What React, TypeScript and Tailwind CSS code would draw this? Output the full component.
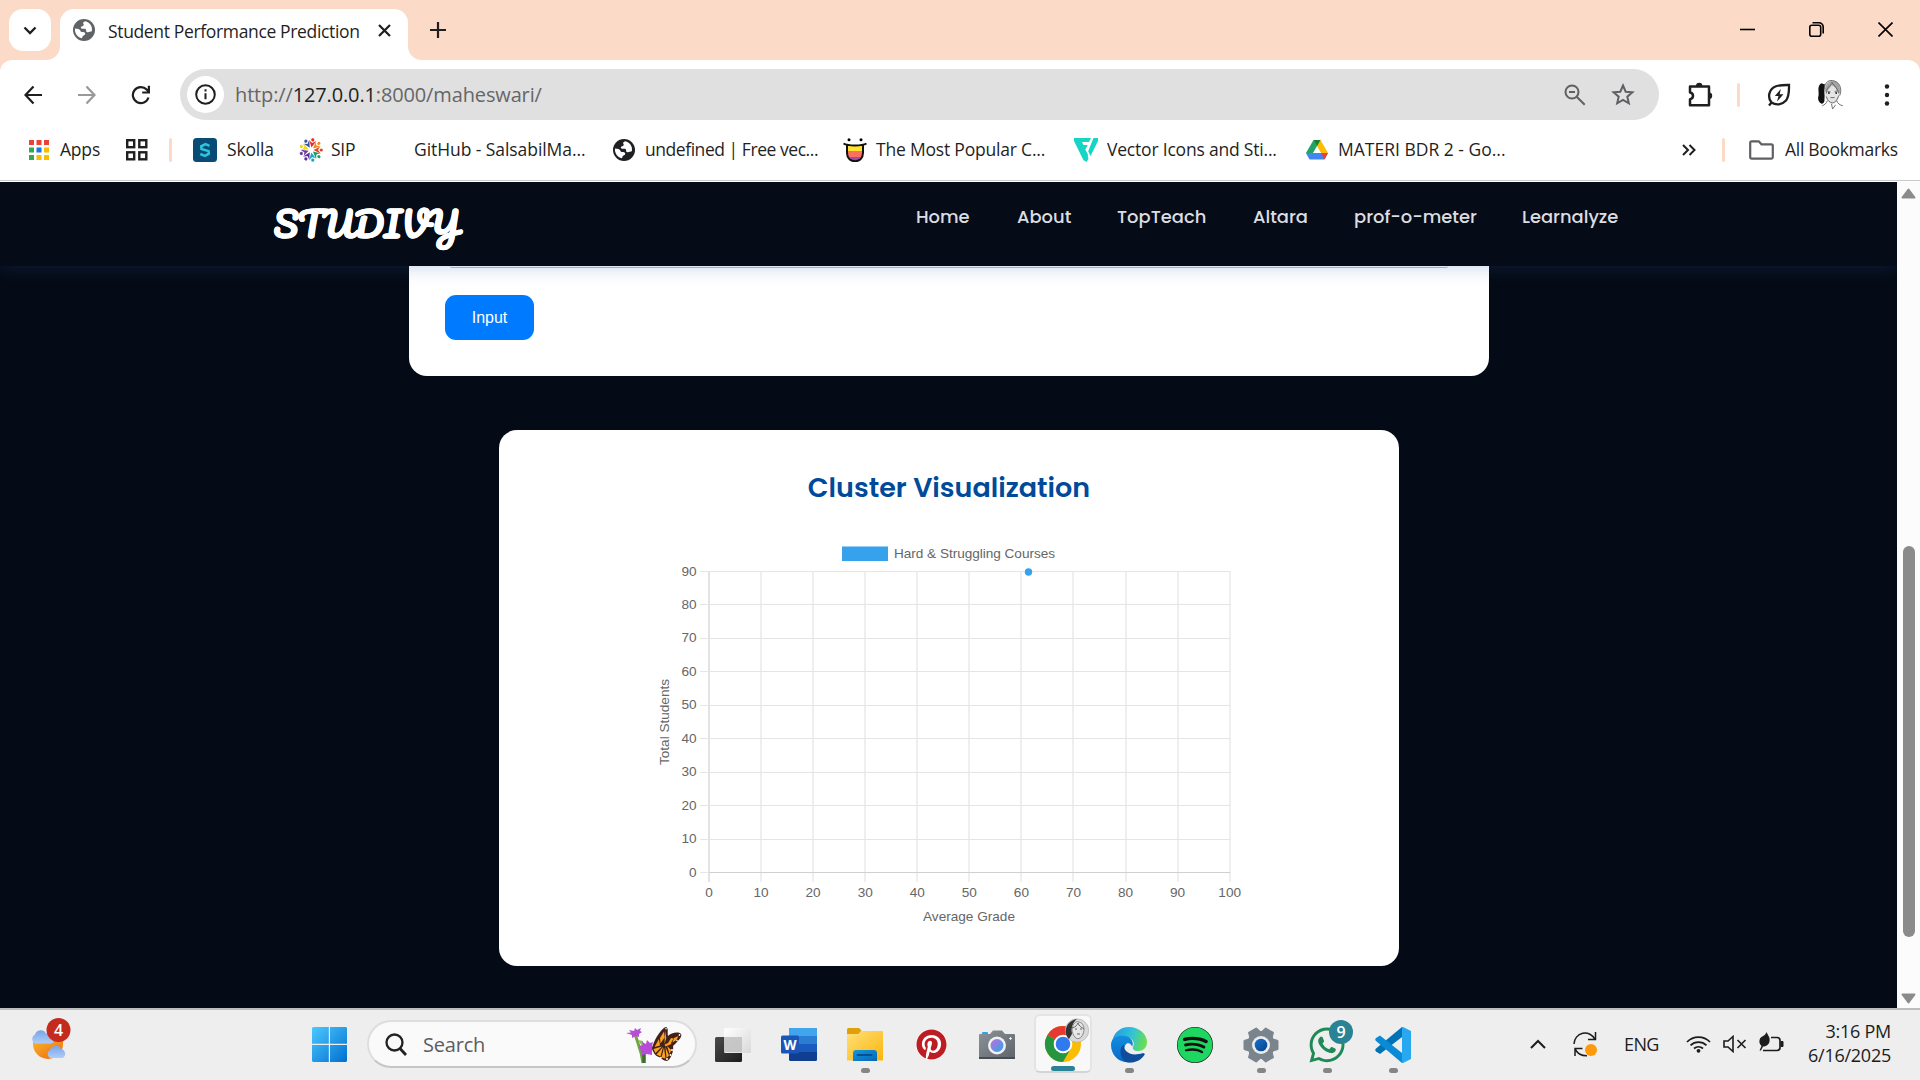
import React from "react";
import { FaSpotify, FaPinterest, FaWhatsapp } from "react-icons/fa";

const UI = "font-['Open_Sans','Noto_Sans',sans-serif]";

function Globe({ color }: { color: string }) {
  return (
    <svg width="22" height="22" viewBox="0 0 22 22">
      <circle cx="11" cy="11" r="11" fill={color} />
      <path
        d="M12.2 2.3c-1.6.6-2.2 1.3-2 2.300.2.9 1 1 .3 1.900-.6.8-2 .5-2.500 1.500-.4.9.1 1.700 1.300 1.800 1.500.1 3-.4 3.600.7.5 1.100-.2 2 .9 2.500 1.700.6 3.300-.3 5-.7 1.200-4.700-2.200-9-6.600-10zM2 9.600c-.6 4.600 2.400 8.700 6.800 9.700.700-.8.300-1.800 1.200-2.400 1-.7 2.300-.8 2.200-2.300-.1-1.400-1.700-1.300-3.300-1.500-1.600-.2-1.300-1.700-2.500-2.600C5.300 9.700 3.700 9.900 2 9.600z"
        fill="#fff"
      />
    </svg>
  );
}

function Portrait({ size }: { size: number }) {
  return (
    <svg width={size} height={size} viewBox="0 0 28 30" fill="none">
      <path d="M4 4c-5 4-1 9-3 14 0 5 4 8 6 4 1-5-1-11 3-16z" fill="#111" />
      <path d="M7 10C7 3 12 0 17 2c6 2 7 9 5 14-1 5-4 8-7 8-5 0-8-7-8-14z" fill="#e4e4e4" />
      <path d="M7 13C8 5 11 2 15 2c6 0 8 6 7 12-2-2-3-6-8-8-2 4-4 5-7 7z" fill="#a5a5a5" />
      <path d="M7 10C7 3 12 0 17 2c6 2 7 9 5 14M9 14c0-5 3-7 6-10M14 3c3 4 6 6 7 11M10 12l3 .5M17 12l3-.5M13 18h4M9 17c1 4 4 6 6 6 3 0 5-4 6-7M10 21c-1 3-3 4-5 5M19 21c1 3 3 4 6 5M14 24l1 5 3-4" stroke="#555" strokeWidth=".8" />
      <circle cx="11.500" cy="13.500" r=".9" fill="#222" />
      <circle cx="18.500" cy="13.500" r=".9" fill="#222" />
    </svg>
  );
}

function TabStrip() {
  return (
    <div className="flex h-[60px] bg-[#fcdac8] pl-[9px] pt-[9px]">
      <button className="flex h-[42px] w-[42px] items-center justify-center rounded-[14px] bg-white">
        <svg width="14" height="9" viewBox="0 0 14 9" fill="none">
          <path d="M1.500 1.500L7 7l5.500-5.500" stroke="#1f1f1f" strokeWidth="2.300" />
        </svg>
      </button>
      <svg className="-ml-[5px] mt-[37px]" width="14" height="14" viewBox="0 0 14 14">
        <path d="M14 0v14H0C8 14 14 8 14 0z" fill="#fff" />
      </svg>
      <div className="flex h-[51px] w-[348px] items-center rounded-t-[14px] bg-white pb-[9px] pl-[13px]">
        <Globe color="#5f6368" />
        <span className="ml-[13px] w-[253px] whitespace-nowrap pt-[2px] text-[17.500px] tracking-[-0.350px] text-[#1f1f1f]">
          Student Performance Prediction
        </span>
        <svg className="ml-[17px]" width="13" height="13" viewBox="0 0 13 13">
          <path d="M1 1l11 11M12 1L1 12" stroke="#1f1f1f" strokeWidth="2.200" />
        </svg>
      </div>
      <svg className="mt-[37px]" width="14" height="14" viewBox="0 0 14 14">
        <path d="M0 0v14h14C6 14 0 8 0 0z" fill="#fff" />
      </svg>
      <svg className="ml-[8px] mt-[13px]" width="16" height="16" viewBox="0 0 16 16">
        <path d="M8 0v16M0 8h16" stroke="#1f1f1f" strokeWidth="2.200" />
      </svg>
      <div className="ml-auto flex w-[180px] items-start pt-[13px]">
        <svg width="15" height="15" viewBox="0 0 15 15">
          <path d="M0 7.500h15" stroke="#000" strokeWidth="1.600" />
        </svg>
        <svg className="ml-[54px]" width="15" height="15" viewBox="0 0 15 15" fill="none" stroke="#000" strokeWidth="1.600">
          <rect x=".8" y="3.300" width="10.900" height="10.900" rx="2" />
          <path d="M3.500.8H10a4.200 4.200 0 0 1 4.200 4.200v6.500" />
        </svg>
        <svg className="ml-[54px]" width="15" height="15" viewBox="0 0 15 15">
          <path d="M.5.500l14 14M14.500.500l-14 14" stroke="#000" strokeWidth="1.600" />
        </svg>
      </div>
    </div>
  );
}

function AddressBar() {
  return (
    <div className="flex h-[69px] items-center rounded-t-[12px] bg-white pl-[24px]">
      <svg width="18" height="20" viewBox="0 0 18 20" fill="none" stroke="#1f1f1f" strokeWidth="2.200">
        <path d="M18 10H2M9.500 1.500L1.500 10l8 8.500" />
      </svg>
      <svg className="ml-[36px]" width="18" height="20" viewBox="0 0 18 20" fill="none" stroke="#999" strokeWidth="2.200">
        <path d="M0 10h16M8.500 1.500l8 8.500-8 8.500" />
      </svg>
      <svg className="ml-[35px]" width="20" height="20" viewBox="0 0 20 20" fill="none" stroke="#1f1f1f" strokeWidth="2.200">
        <path d="M17.500 12.500A8 8 0 1 1 15.700 4.600L18 7M17.900.8V7.500H11.200" />
      </svg>
      <div className="ml-[29px] flex h-[51px] w-[1479px] items-center rounded-full bg-[#e0e0e0] pl-[7px]">
        <div className="flex h-[37px] w-[37px] items-center justify-center rounded-full bg-white">
          <svg width="21" height="21" viewBox="0 0 21 21" fill="none" stroke="#1f1f1f" strokeWidth="2">
            <circle cx="10.500" cy="10.500" r="9.300" />
            <path d="M10.500 9.300v6M10.500 5.300v2.200" />
          </svg>
        </div>
        <span className="ml-[11px] w-[311px] whitespace-nowrap text-[20px] tracking-[-0.140px] text-[#666]">
          http://<span className="text-[#1f1f1f]">127.0.0.1</span>:8000/maheswari/
        </span>
        <svg className="ml-[1018px]" width="22" height="22" viewBox="0 0 22 22" fill="none" stroke="#5f6063" strokeWidth="2">
          <circle cx="8" cy="8" r="6.500" />
          <path d="M12.700 12.700l8 8M5 8h6" />
        </svg>
        <svg className="ml-[25px]" width="24" height="23" viewBox="0 0 24 23" fill="none" stroke="#5f6063" strokeWidth="2">
          <path d="M12 2.500l2.700 6.200 6.700.6-5.100 4.400 1.500 6.600L12 16.800l-5.800 3.500 1.500-6.600-5.100-4.400 6.700-.6z" />
        </svg>
      </div>
      <svg className="-mt-[2px] ml-[28px]" width="26" height="26" viewBox="0 0 26 26">
        <path d="M3 5.500h19v18.700H3v-6c4-.5 4-6.200 0-6.700z" fill="none" stroke="#1f1f1f" strokeWidth="2.500" strokeLinejoin="round" />
        <path d="M9 5a3.200 3.200 0 0 1 6.400 0zM22 11.500a3.200 3.200 0 0 1 0 6.400z" fill="#1f1f1f" />
      </svg>
      <div className="ml-[24px] h-[24px] w-[3px] rounded bg-[#fcdac8]" />
      <svg className="ml-[27px]" width="24" height="24" viewBox="0 0 24 24" fill="none" stroke="#1f1f1f" strokeWidth="2.300">
        <path d="M4.500 19.500C0 14 2 6 9 3.300 13 1.800 18 2 22 2c0 5 .5 11-3 15.500-4 4.500-10 5-14.500 2zM5 19l-3 3.500" />
        <path d="M13.800 6L7.800 13h3.700l-1.500 5.500 6.500-7.300h-3.800z" fill="#1f1f1f" stroke="none" />
      </svg>
      <div className="ml-[25px]"><Portrait size={31} /></div>
      <svg className="ml-[37px]" width="6" height="22" viewBox="0 0 6 22" fill="#1f1f1f">
        <circle cx="3" cy="2.500" r="2.200" />
        <circle cx="3" cy="11" r="2.200" />
        <circle cx="3" cy="19.500" r="2.200" />
      </svg>
    </div>
  );
}

const dotColors = ["#ea4335", "#ea4335", "#ea4335", "#34a853", "#1a73e8", "#fbbc04", "#34a853", "#fbbc04", "#fbbc04"];
const sipColors = ["#ea2a1f", "#f58a1f", "#e8412d", "#1f9d55", "#18a4c8", "#5b2d91", "#6b3fa0", "#f4d50c", "#3455a4"];

function BookmarkBar() {
  const label = "-mt-[2px] whitespace-nowrap text-[17.500px] text-[#1f1f1f]";
  return (
    <div className="flex h-[51px] items-center bg-white pb-[9px] pl-[29px]">
      <svg width="20" height="20" viewBox="0 0 20 20">
        {dotColors.map((c, i) => (
          <rect key={i} x={(i % 3) * 7.500} y={Math.floor(i / 3) * 7.500} width="5" height="5" fill={c} />
        ))}
      </svg>
      <span className={`${label} ml-[11px] w-[42px] tracking-[-0.200px]`}>Apps</span>
      <svg className="ml-[24px]" width="22" height="22" viewBox="0 0 22 22" fill="none" stroke="#1f1f1f" strokeWidth="2.400">
        <rect x="1.200" y="1.200" width="7" height="7" />
        <rect x="13.300" y="1.200" width="7" height="7" />
        <rect x="1.200" y="13.300" width="7" height="7" />
        <rect x="13.300" y="13.300" width="7" height="7" />
      </svg>
      <div className="ml-[21px] h-[24px] w-[3px] rounded bg-[#fcdac8]" />
      <svg className="ml-[21px]" width="24" height="24" viewBox="0 0 24 24">
        <rect width="24" height="24" rx="3.500" fill="#084c75" />
        <path d="M16.500 7.800L12.500 6.200 8.200 8.300l.3 2.700 7.100 2.100.2 2.600-3.800 2.200-4.700-1.900" fill="none" stroke="#2ec4dc" strokeWidth="2.500" />
      </svg>
      <span className={`${label} ml-[10px] w-[50px] tracking-[-0.200px]`}>Skolla</span>
      <svg className="ml-[22px]" width="24" height="24" viewBox="-12 -12 24 24">
        {sipColors.map((c, i) => (
          <g key={i} transform={`rotate(${i * 40 + 10})`}>
            <path d="M0-2.500L-3.200-9l3.200 2L3.700-9.800z" fill={c} />
            <circle cx="0" cy="-10.300" r="1.600" fill={c} />
          </g>
        ))}
      </svg>
      <span className={`${label} ml-[8px] w-[28px] tracking-[-0.300px]`}>SIP</span>
      <span className={`${label} ml-[55px] w-[174px] tracking-[-0.070px]`}>GitHub - SalsabilMa...</span>
      <div className="ml-[25px]"><Globe color="#1f2023" /></div>
      <span className={`${label} ml-[10px] w-[176px] tracking-[-0.450px]`}>undefined | Free vec...</span>
      <svg className="ml-[22px]" width="24" height="24" viewBox="0 0 24 24">
        <path d="M4 7h16v7H4z" fill="#ffe52e" />
        <path d="M4 13h16l-1 6H5z" fill="#ff6f61" />
        <path d="M6 19h12l-3 4H9z" fill="#9c4fa0" />
        <path d="M.5 5.500C5 8 19 8 23.500 5.500M4 7v8c0 11 16 11 16 0V7" fill="none" stroke="#111" strokeWidth="2" />
        <circle cx="6" cy="1.700" r="1.500" />
        <circle cx="18" cy="1.700" r="1.500" />
      </svg>
      <span className={`${label} ml-[9px] w-[174px] tracking-[-0.200px]`}>The Most Popular C...</span>
      <svg className="ml-[24px]" width="24" height="24" viewBox="0 0 24 24" fill="#16d5c5">
        <path d="M0 0h17l-2 4H8l1.500 3h4.200l-2 4h-.6l3 6-2 4.500c-.7 1.700-2 1.700-3 0L0 3z" />
        <path d="M19.500 0H24v3l-7.500 15-2.300-4.700zM12 15l2.500 5-1.600 4-2-1z" />
      </svg>
      <span className={`${label} ml-[9px] w-[174px] tracking-[-0.200px]`}>Vector Icons and Sti...</span>
      <svg className="ml-[25px]" width="22" height="20" viewBox="0 0 22 20">
        <path d="M7.500 0h7L4 18.500 0 13z" fill="#1fa463" />
        <path d="M7.500 0h7L22 13h-7z" fill="#fbbc04" />
        <path d="M7.500 0L11 6.300 14.500 0z" fill="#188038" />
        <path d="M0 13h22l-3.500 6.500h-15z" fill="#4285f4" />
        <path d="M15 13h7l-3.500 6.500z" fill="#ea4335" />
        <path d="M11 6.500l3.800 6.500H7.200z" fill="#fff" />
      </svg>
      <span className={`${label} ml-[10px] w-[174px] tracking-[0px]`}>MATERI BDR 2 - Go...</span>
      <svg className="ml-[170px]" width="14" height="12" viewBox="0 0 14 12" fill="none" stroke="#1f1f1f" strokeWidth="2">
        <path d="M1 1l5 5-5 5M7.500 1l5 5-5 5" />
      </svg>
      <div className="ml-[26px] h-[24px] w-[3px] rounded bg-[#fcdac8]" />
      <svg className="ml-[24px]" width="25" height="20" viewBox="0 0 25 20" fill="none" stroke="#5f6063" strokeWidth="2.200">
        <path d="M1.200 3a1.500 1.500 0 0 1 1.500-1.700h7l2.800 3h9.800A1.500 1.500 0 0 1 23.800 6v11a1.600 1.600 0 0 1-1.600 1.600H2.800A1.600 1.600 0 0 1 1.200 17z" />
      </svg>
      <span className={`${label} ml-[11px] tracking-[-0.300px]`}>All Bookmarks</span>
    </div>
  );
}

function SiteHeader() {
  const link = "whitespace-nowrap";
  return (
    <header className="relative z-10 flex h-[84px] w-full shrink-0 bg-[#050b17] pl-[273px] font-['Poppins','Inter',sans-serif] text-[17.900px] font-medium text-[#dcdde0] shadow-[0_0_18px_0_rgba(40,85,170,0.28)]">
      <svg className="mt-[7px]" width="200" height="76" viewBox="0 0 200 76">
        <text
          x="0.500"
          y="49"
          textLength="185"
          lengthAdjust="spacingAndGlyphs"
          fill="#fff"
          stroke="#fff"
          strokeWidth="0.300"
          strokeLinejoin="round"
          className="font-['Pacifico','Lobster','DejaVu_Serif',serif] text-[34.500px] font-bold"
        >
          STUDIVY
        </text>
      </svg>
      <nav className="ml-[443px] flex pt-[22px]">
        <a className={`${link} w-[101px]`}>Home</a>
        <a className={`${link} w-[100px]`}>About</a>
        <a className={`${link} w-[136px]`}>TopTeach</a>
        <a className={`${link} w-[101px]`}>Altara</a>
        <a className={`${link} w-[168px]`}>prof-o-meter</a>
        <a className={`${link} w-[100px]`}>Learnalyze</a>
      </nav>
    </header>
  );
}

const X0 = 170;
const Y0 = 332;
const XS = 52.070;
const YS = 33.440;

function ScatterChart() {
  const xs = Array.from({ length: 11 }, (_, i) => i);
  const ys = Array.from({ length: 10 }, (_, i) => i);
  const line = "#e5e5e5";
  return (
    <svg className="block font-['Liberation_Sans',Arial,sans-serif] text-[13.600px]" width="820" height="400" viewBox="0 0 820 400" fill="#666">
      <rect x="303" y="6.500" width="46" height="14.500" fill="#36a2eb" />
      <text x="355" y="18" textLength="161">Hard &amp; Struggling Courses</text>
      {xs.map((i) => (
        <g key={i}>
          <path d={`M${Math.round(X0 + i * XS)} 31V342`} stroke={i === 0 ? "#d0d0d0" : line} strokeWidth="1.200" />
          <text x={X0 + i * XS} y="356.500" textAnchor="middle">{i * 10}</text>
        </g>
      ))}
      {ys.map((i) => (
        <g key={i}>
          <path d={`M161 ${Math.round(Y0 - i * YS) + 0.500}H691`} stroke={line} strokeWidth="1.200" />
          <text x="157.500" y={Y0 - i * YS + 4.500} textAnchor="end">{i * 10}</text>
        </g>
      ))}
      <path d="M170 332.500H691" stroke="#d0d0d0" strokeWidth="1.200" />
      <circle cx="489.500" cy="32" r="3.700" fill="#36a2eb" />
      <text x="430" y="381" textAnchor="middle" textLength="92">Average Grade</text>
      <text transform="translate(130 182) rotate(-90)" textAnchor="middle" textLength="86">Total Students</text>
    </svg>
  );
}

function WebPage() {
  return (
    <div className="flex h-[826px] bg-[#fcfcfc]">
      <main className="flex w-[1897px] flex-col items-center overflow-hidden bg-[#050b16]">
        <SiteHeader />
        <section className="ml-[1px] h-[110px] w-[1080px] shrink-0 rounded-b-[18px] bg-white px-[36px]">
          <div className="ml-[5px] h-[2px] w-[998px] rounded-b border-b border-[#b9bdc6]" />
          <button className="mt-[27px] flex h-[45px] w-[89px] items-center justify-center rounded-[11px] bg-[#007bff] font-['Liberation_Sans',Arial,sans-serif] text-[16px] text-white">
            Input
          </button>
        </section>
        <section className="ml-[1px] mt-[54px] flex h-[536px] w-[900px] shrink-0 flex-col items-center rounded-[18px] bg-white">
          <h2 className="mt-[37px] h-[73px] whitespace-nowrap font-['Poppins','Inter',sans-serif] text-[27px] font-semibold leading-[42px] text-[#004a99]">
            Cluster Visualization
          </h2>
          <ScatterChart />
        </section>
      </main>
      <div className="flex w-[23px] flex-col items-center pt-[6px]">
        <svg width="15" height="11" viewBox="0 0 15 11">
          <path d="M7.500 1.500L13.500 9.500h-12z" fill="#8b8b8b" stroke="#8b8b8b" strokeWidth="2" strokeLinejoin="round" />
        </svg>
        <div className="mt-[347px] h-[391px] w-[12px] rounded-full bg-[#8b8b8b]" />
        <svg className="mt-[56px]" width="15" height="11" viewBox="0 0 15 11">
          <path d="M7.500 9.500L13.500 1.500h-12z" fill="#8b8b8b" stroke="#8b8b8b" strokeWidth="2" strokeLinejoin="round" />
        </svg>
      </div>
    </div>
  );
}

function WeatherIcon() {
  return (
    <svg width="42" height="44" viewBox="0 0 42 44">
      <defs>
        <linearGradient id="sun" x1="0" y1="0" x2="1" y2="1">
          <stop offset="0" stopColor="#f7b52b" />
          <stop offset="1" stopColor="#f0660f" />
        </linearGradient>
        <linearGradient id="cloud" x1="0" y1="0" x2="0" y2="1">
          <stop offset="0" stopColor="#7ba4e6" />
          <stop offset="1" stopColor="#aecdf9" />
        </linearGradient>
      </defs>
      <path d="M3 22h30v4a15 15 0 0 1-30 0z" fill="url(#sun)" />
      <path d="M5 25.500a5 5 0 0 1 0-9 6 6 0 0 1 11-1 6 6 0 0 1 6 10z" fill="url(#cloud)" />
      <path d="M20 40a4.500 4.500 0 0 1 0-8 6 6 0 0 1 11-1 5 5 0 0 1 2 9z" fill="url(#cloud)" />
      <circle cx="28.500" cy="12" r="12" fill="#c42b1c" />
      <text x="28.500" y="17.500" textAnchor="middle" fill="#fff" className="font-['Open_Sans',sans-serif] text-[16px] font-semibold">4</text>
    </svg>
  );
}

function WindowsLogo() {
  return (
    <svg width="35" height="35" viewBox="0 0 35 35">
      <defs>
        <linearGradient id="win" x1="0" y1="0" x2="35" y2="35" gradientUnits="userSpaceOnUse">
          <stop offset="0" stopColor="#4cc9ff" />
          <stop offset="1" stopColor="#006fcf" />
        </linearGradient>
      </defs>
      <path d="M1 0h15.800v16.800H0V1zM18 0h16l1 1v15.800H18zM0 18h16.800v17H1l-1-1zM18 18h17v16l-1 1H18z" fill="url(#win)" />
    </svg>
  );
}

function Butterfly() {
  return (
    <svg width="56" height="37" viewBox="0 0 56 37">
      <path d="M9 6c2 10 6 14 8 30" stroke="#6fa544" strokeWidth="3" fill="none" />
      <path d="M12 13l5 1 1 8z" fill="#8dbd58" />
      <path d="M18 36V22" stroke="#3d6e2c" strokeWidth="3.500" />
      <path d="M0 6l5-.5L3 3l5 1 1-3 2 2 4-2-1 3 2 1-3 2v3l-3-1-4 2V8z" fill="#b44fd6" />
      <path d="M13 19l4-1-1-3 4 2 1-4 3 3 3-1-1 4 2 2-2 3v4l-5-1-5 1-1-4z" fill="#ba49da" />
      <path d="M26 21C29 10 37 0 40 0c3 1 1 6 2 9 3-3 10-5 13-2 2 3-5 9-8 12 1 4-2 14-6 15-4 0-5-3-8-4-4-1-6-5-7-9z" fill="#43211a" />
      <path d="M28.500 20l4.500-8 1 6.500zM34 11l4-6.500.5 6-4 6zM39 3.500l1.300 7.500-1.800 6zM41.500 17l3.500-6 2.500.5-2.500 4.500zM48 11l4.500-2-2 4-4 2.500zM27.500 22l8.500-2.500-6.500 6.500zM37 20l-6.500 7.500 4 2zM38 20.500l-2.500 10 4 1zM39.500 20l1 11 2.500-2.500zM41 19l2.700 8 1.500-4z" fill="#f9a21c" />
      <path d="M39 18.500l6-2.500" stroke="#f9a21c" strokeWidth="2" />
      <g fill="#fff">
        <circle cx="40" cy="1.800" r=".8" /><circle cx="53.500" cy="8" r=".9" /><circle cx="51" cy="13.500" r=".8" /><circle cx="46" cy="23" r="1" /><circle cx="44.500" cy="28" r="1" /><circle cx="41" cy="32" r="1" /><circle cx="35" cy="30.500" r=".8" />
      </g>
    </svg>
  );
}

function TaskView() {
  return (
    <svg width="36" height="34" viewBox="0 0 36 34">
      <defs>
        <linearGradient id="tv1" x1="0" y1="0" x2="1" y2="1"><stop offset="0" stopColor="#4a4a4a" /><stop offset="1" stopColor="#1c1c1c" /></linearGradient>
        <linearGradient id="tv2" x1="0" y1="0" x2="1" y2="1"><stop offset="0" stopColor="#fff" /><stop offset="1" stopColor="#d8d8d8" /></linearGradient>
      </defs>
      <rect x="0" y="9" width="27" height="25" rx="1.500" fill="url(#tv1)" />
      <rect x="9" y="0" width="27" height="25" rx="1.500" fill="url(#tv2)" />
      <rect x="9" y="9" width="18" height="15" fill="#c0c0c0" opacity=".85" />
    </svg>
  );
}

function Word() {
  return (
    <svg width="36" height="33" viewBox="0 0 36 33">
      <rect x="8" width="28" height="33" rx="1.500" fill="#103f91" />
      <path d="M8 1.500A1.500 1.500 0 0 1 9.500 0h25A1.500 1.500 0 0 1 36 1.500V8H8z" fill="#41a5ee" />
      <path d="M8 8h28v8H8z" fill="#2b7cd3" />
      <path d="M8 16h28v8H8z" fill="#185abd" />
      <rect y="7.500" width="18" height="18" rx="1.500" fill="#1a56b8" />
      <text x="9" y="21.500" textAnchor="middle" fill="#fff" className="font-['Open_Sans',sans-serif] text-[13.500px] font-bold">W</text>
    </svg>
  );
}

function Explorer() {
  return (
    <svg width="36" height="33" viewBox="0 0 36 33">
      <defs>
        <linearGradient id="fold" x1="0" y1="0" x2="1" y2="1"><stop offset="0" stopColor="#ffe07a" /><stop offset="1" stopColor="#fbb50a" /></linearGradient>
        <linearGradient id="fold2" x1="0" y1="0" x2="1" y2="1"><stop offset="0" stopColor="#1795dd" /><stop offset="1" stopColor="#0567b8" /></linearGradient>
      </defs>
      <path d="M0 1.500A1.500 1.500 0 0 1 1.500 0H12l3 3h-1l-2 3H0z" fill="#e0a00b" />
      <path d="M0 6h11l4-3h20a1 1 0 0 1 1 1v28.500H0z" fill="url(#fold)" />
      <path d="M6 33v-8a3 3 0 0 1 3-3h18a3 3 0 0 1 3 3v8z" fill="url(#fold2)" />
      <path d="M10.500 27h14" stroke="#05508f" strokeWidth="1.800" strokeLinecap="round" />
    </svg>
  );
}

function CameraApp() {
  return (
    <svg width="36" height="30" viewBox="0 0 36 30">
      <defs>
        <linearGradient id="cam" x1="0" y1="0" x2="1" y2="1"><stop offset="0" stopColor="#8b9298" /><stop offset="1" stopColor="#5e646b" /></linearGradient>
        <linearGradient id="lens" x1="0" y1="0" x2="1" y2="1"><stop offset="0" stopColor="#c56ce0" /><stop offset="1" stopColor="#27a8e8" /></linearGradient>
      </defs>
      <path d="M3 4V3a1 1 0 0 1 1-1h4a1 1 0 0 1 1 1v1z" fill="#28a8ea" />
      <path d="M0 5a1 1 0 0 1 1-1h10l3-3.500h9L26 4h9a1 1 0 0 1 1 1v24H0z" fill="url(#cam)" />
      <path d="M0 27h36v2H0z" fill="#474d53" />
      <circle cx="18" cy="15.500" r="9" fill="#f1f1f4" />
      <circle cx="18" cy="15.500" r="6.500" fill="url(#lens)" />
      <path d="M31.500 7v3M30 8.500h3" stroke="#e8e8e8" />
    </svg>
  );
}

function Chrome() {
  return (
    <svg width="46" height="44" viewBox="0 0 46 44">
      <circle cx="19" cy="26" r="18" fill="#fbbc04" />
      <path d="M19 26L3.400 17A18 18 0 0 1 34.600 17H19z" fill="#e53a30" />
      <path d="M19 26L3.400 17A18 18 0 0 0 19 44l7.800-13.500z" fill="#25963f" />
      <circle cx="19" cy="26" r="9.300" fill="#fff" />
      <circle cx="19" cy="26" r="7.300" fill="#3079ee" />
      <circle cx="33" cy="12.500" r="11.700" fill="#d9d9d9" stroke="#aaa" strokeWidth=".6" />
      <path d="M23 8c2-4 6-6.500 10-7-4 3-6 8-5 15l-3 5c-4-4-4-9-2-13z" fill="#333" />
      <path d="M28 11c1-6 4-8 7-7 5 1 6 7 4 12-2 5-6 6-8 3-2-2-3-5-3-8z" fill="#e6e6e6" stroke="#8a8a8a" />
      <path d="M28 10c4-1 5-3 6-5 1 3 3 4 6 6M31 11h2M36 11h2M33 16h3" stroke="#666" fill="none" />
    </svg>
  );
}

function Edge() {
  return (
    <svg width="36" height="36" viewBox="0 0 36 36">
      <defs>
        <linearGradient id="e1" x1="0" y1=".3" x2="1" y2=".5"><stop offset="0" stopColor="#239be0" /><stop offset=".55" stopColor="#31c3d8" /><stop offset="1" stopColor="#6be04a" /></linearGradient>
        <linearGradient id="e2" x1="0" y1="0" x2="0" y2="1"><stop offset="0" stopColor="#128ee0" /><stop offset="1" stopColor="#0868c8" /></linearGradient>
      </defs>
      <path d="M1 16C2 6 9 0 18 0c10 0 18 7 18 15 0 6-4 9-9 9-4 0-6-2-5-4 2-4 0-9-6-9C9 9 3 11 1 16z" fill="url(#e1)" />
      <path d="M0 18C0 10 8 8 14 9c7 1 9 7 7 11-1-4-5-5-7-1-3 6 2 12 7 16C9 37 0 29 0 18z" fill="url(#e2)" />
      <path d="M13 17c-1 8 7 13 19 9l2 1c-4 7-12 10-19 8C8 31 8 21 13 17z" fill="#104d9b" />
      <path d="M21 20c-1-4-5-5-6.500-2-.8 3 1.500 6 4.500 7 4 1.500 9 .8 13-1-4 1.500-9 1-10-2z" fill="#eee" />
    </svg>
  );
}

function Gear() {
  const teeth = [0, 60, 120, 180, 240, 300];
  return (
    <svg width="36" height="36" viewBox="-18 -18 36 36">
      <defs>
        <linearGradient id="gb" x1="0" y1="0" x2="1" y2="1"><stop offset="0" stopColor="#1374cf" /><stop offset="1" stopColor="#083f87" /></linearGradient>
      </defs>
      <circle r="14" fill="#7b848c" />
      {teeth.map((a) => (
        <path key={a} transform={`rotate(${a + 30})`} d="M-6-12l1.500-5h9L6-12z" fill="#7b848c" stroke="#7b848c" strokeLinejoin="round" />
      ))}
      <circle r="9" fill="#e9ecee" />
      <circle r="6.300" fill="url(#gb)" />
    </svg>
  );
}

function VsCode() {
  return (
    <svg width="36" height="36" viewBox="0 0 36 36">
      <path d="M27 0v10L5 27 1 24.500c-1-.8-1-2 0-3z" fill="#0073b7" />
      <path d="M1 11l4-2.500L27 26v10L1 14c-1-1-1-2 0-3z" fill="#0b8bd6" />
      <path d="M26 0l2 0 8 4v28l-8 4h-2c1-.5 1-1 1-2V2c0-1 0-1.500-1-2z" fill="#28a8f0" />
    </svg>
  );
}

function TaskbarItem({ children, dot }: { children: React.ReactNode; dot?: boolean }) {
  return (
    <div className="flex h-[63px] w-[66px] flex-col items-center">
      <div className="flex h-[57px] items-center pt-[10px]">{children}</div>
      {dot && <div className="h-[5px] w-[9px] shrink-0 rounded-full bg-[#858585]" />}
    </div>
  );
}

function Taskbar() {
  return (
    <div className="flex h-[72px] items-start border-t-2 border-[#bdbdbd] bg-[#eeeeee]">
      <div className="ml-[30px] mt-[8px]"><WeatherIcon /></div>
      <div className="ml-[240px] mt-[17px]"><WindowsLogo /></div>
      <div className="ml-[20px] mt-[10px] flex h-[48px] w-[330px] items-center rounded-full border-2 border-[#dedede] border-b-[#c6c6c6] bg-[#fafafa] pl-[16px]">
        <svg width="22" height="23" viewBox="0 0 22 23" fill="none" stroke="#222" strokeWidth="2.300">
          <circle cx="9.500" cy="9.500" r="8" />
          <path d="M15 15.500l6 6.500" strokeWidth="2.800" />
        </svg>
        <span className="ml-[16px] w-[66px] whitespace-nowrap pt-[1px] text-[20px] tracking-[-0.200px] text-[#5d5d5d]">Search</span>
        <div className="ml-[137px] mt-[2px]"><Butterfly /></div>
      </div>
      <div className="ml-[3px] flex pt-[1px]">
        <TaskbarItem><TaskView /></TaskbarItem>
        <TaskbarItem><Word /></TaskbarItem>
        <TaskbarItem dot><Explorer /></TaskbarItem>
        <TaskbarItem><div className="rounded-full bg-white"><FaPinterest size={31} color="#bd1c23" /></div></TaskbarItem>
        <TaskbarItem><CameraApp /></TaskbarItem>
        <div className="flex w-[66px] justify-center">
          <div className="mt-[3px] flex h-[59px] w-[58px] flex-col items-center rounded-[6px] border-2 border-[#e4e4e4] border-b-[#d4d4d4] bg-[#f8f8f8]">
            <div className="ml-[7px] mt-[2px] h-[51px]"><Chrome /></div>
            <div className="h-[5px] w-[24px] shrink-0 rounded-full bg-[#2a8394]" />
          </div>
        </div>
        <TaskbarItem dot><Edge /></TaskbarItem>
        <TaskbarItem><div className="rounded-full bg-[#111]"><FaSpotify size={36} color="#1ed760" /></div></TaskbarItem>
        <TaskbarItem dot><Gear /></TaskbarItem>
        <TaskbarItem dot>
          <div className="relative">
            <FaWhatsapp size={40} color="#1f8a57" />
            <span className="absolute -top-[5px] left-[22px] flex h-[24px] w-[24px] items-center justify-center rounded-full bg-[#2a8394] text-[16px] font-semibold text-white">9</span>
          </div>
        </TaskbarItem>
        <TaskbarItem dot><VsCode /></TaskbarItem>
      </div>
      <div className="ml-auto flex h-[70px] items-center pr-[29px] text-[#1c1c1c]">
        <svg className="-mt-[2px]" width="16" height="10" viewBox="0 0 16 10" fill="none"><path d="M1 9l7-7 7 7" stroke="#1c1c1c" strokeWidth="2" /></svg>
        <svg className="-mt-[2px] ml-[27px]" width="25" height="25" viewBox="0 0 25 25" fill="none" stroke="#1c1c1c" strokeWidth="1.500">
          <path d="M1 12A11 11 0 0 1 22 7.500M22.500 0v7.500H15M2 24v-7.500h7.500M2.300 17.500C5 22 9 24 14 23.800" />
          <circle cx="18" cy="18" r="6" fill="#fe9a0a" stroke="none" />
        </svg>
        <span className="-mt-[2px] ml-[26px] w-[36px] whitespace-nowrap text-[18px] tracking-[-0.600px]">ENG</span>
        <svg className="-mt-[2px] ml-[26px]" width="25" height="18" viewBox="0 0 25 18" fill="none" stroke="#1c1c1c" strokeWidth="1.700">
          <path d="M1 7a16 16 0 0 1 23 0M4.500 10.300a11.500 11.500 0 0 1 16 0M8 13.500a6.800 6.800 0 0 1 9 0" />
          <circle cx="12.500" cy="15.800" r="1.900" fill="#1c1c1c" stroke="none" />
        </svg>
        <svg className="-mt-[2px] ml-[12px]" width="24" height="18" viewBox="0 0 24 18" fill="none" stroke="#1c1c1c" strokeWidth="1.600">
          <path d="M1 6h4l5-4.500v15L5 12H1zM14.500 5l8 8M22.500 5l-8 8" />
        </svg>
        <svg className="-mt-[6px] ml-[12px]" width="25" height="21" viewBox="0 0 25 21" fill="none">
          <path d="M12 5.500h6a3 3 0 0 1 3 3V15.500a3 3 0 0 1-3 3H4" stroke="#1c1c1c" strokeWidth="1.700" />
          <path d="M22 9.500h2v5h-2z" fill="#1c1c1c" stroke="#1c1c1c" />
          <path d="M7.500 0c1 3 4 5 3 9.500-.7 3.500-3.500 5-6.500 5L2 18.500H.5L2.500 14C0 12 0 9 1 6.500 2.500 4 6.500 4 7.500 0z" fill="#1c1c1c" />
        </svg>
        <div className="-mt-[4px] ml-[18px] w-[89px] whitespace-nowrap text-right text-[18px] leading-[24px] tracking-[-0.250px]">
          <div>3:16 PM</div>
          <div>6/16/2025</div>
        </div>
      </div>
    </div>
  );
}

export default function App() {
  return (
    <div className={`h-[1080px] w-[1920px] overflow-hidden bg-white ${UI}`}>
      <TabStrip />
      <div className="bg-[#fcdac8]">
        <AddressBar />
      </div>
      <BookmarkBar />
      <div className="h-[2px] border-t border-[#cacaca] bg-white" />
      <WebPage />
      <Taskbar />
    </div>
  );
}
